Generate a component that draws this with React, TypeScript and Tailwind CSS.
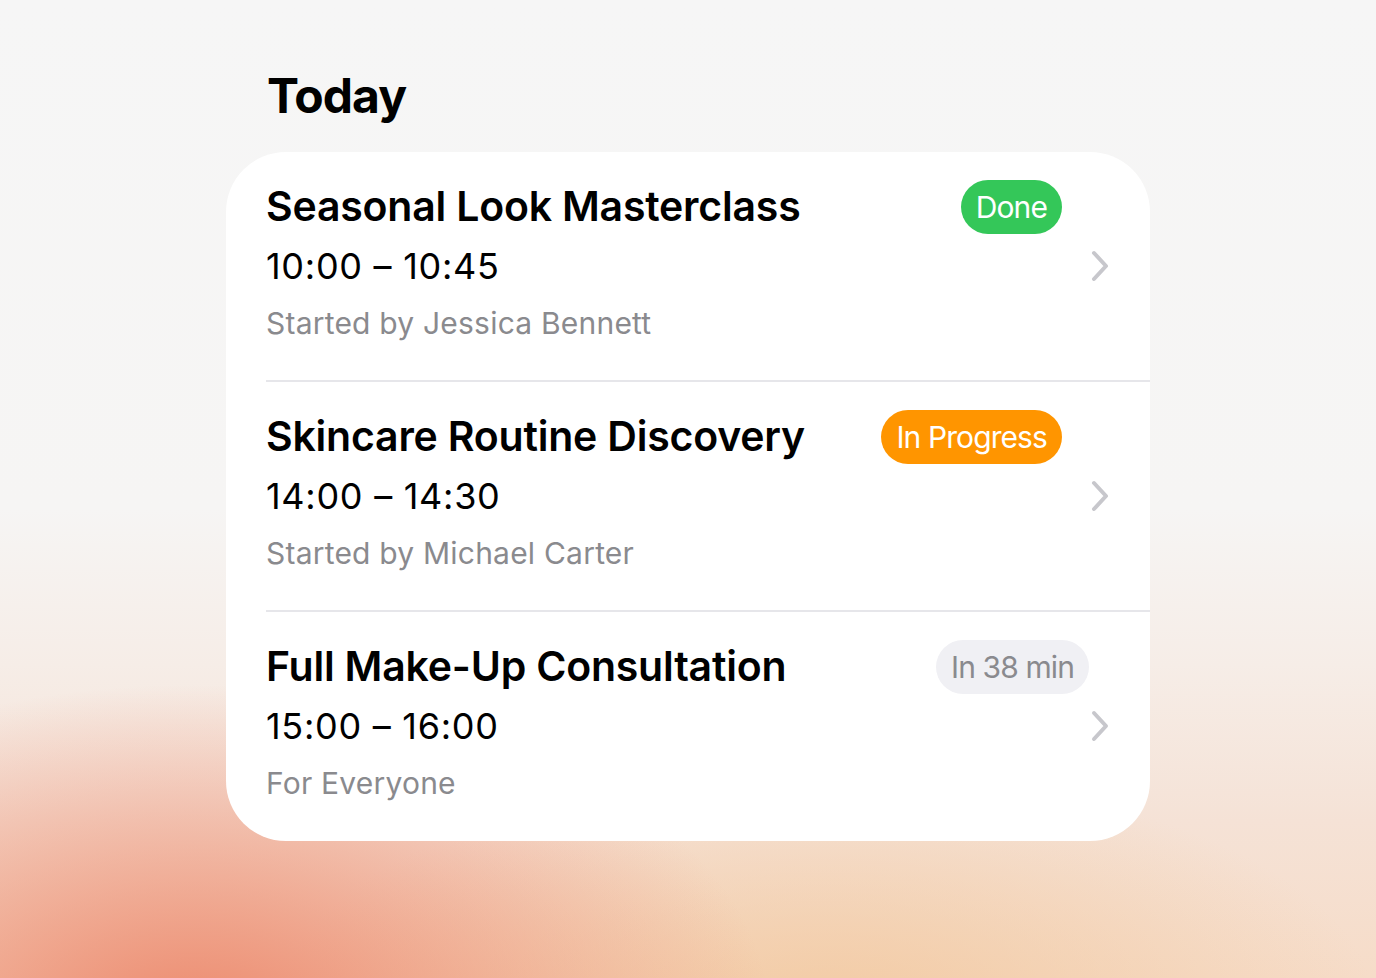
const sessions = [
  {
    title: "Seasonal Look Masterclass",
    time: "10:00 – 10:45",
    note: "Started by Jessica Bennett",
    badge: "Done",
    badgeClass: "bg-[#34c759] text-white mr-[48px]",
  },
  {
    title: "Skincare Routine Discovery",
    time: "14:00 – 14:30",
    note: "Started by Michael Carter",
    badge: "In Progress",
    badgeClass: "bg-[#ff9500] text-white mr-[48px]",
  },
  {
    title: "Full Make-Up Consultation",
    time: "15:00 – 16:00",
    note: "For Everyone",
    badge: "In 38 min",
    badgeClass: "bg-[#f0f0f4] text-[#8a8a8e] mr-[21px]",
  },
];

const Chevron = () => (
  <svg width="20" height="32" viewBox="0 0 20 32" fill="none">
    <path
      d="M4 3 L16 16 L4 29"
      stroke="#c7c7cc"
      strokeWidth="4"
      strokeLinecap="round"
      strokeLinejoin="round"
    />
  </svg>
);

export default function App() {
  return (
    <div className="min-h-screen w-full bg-[#f6f6f6] bg-[radial-gradient(ellipse_42%_34%_at_14%_104%,rgba(236,134,106,0.95),rgba(236,134,106,0)),radial-gradient(ellipse_40%_24%_at_60%_103%,rgba(242,200,158,0.85),rgba(242,200,158,0)),linear-gradient(to_bottom,#f6f6f6_0%,#f6f5f4_52%,#f6ede7_68%,#f5e2d6_84%,#f6dcc8_100%)] font-['Inter','Noto_Sans',sans-serif]">
      <div className="mx-auto w-[924px] pt-[66px]">
        <h1 className="pl-[41px] text-[48px] leading-[60px] font-bold tracking-[-0.02em] text-black">
          Today
        </h1>

        <div className="mt-[26px] rounded-[60px] bg-white">
          {sessions.map((s, i) => {
            const last = i === sessions.length - 1;
            return (
              <div key={s.title} className="pl-[40px]">
                <div
                  className={`pt-[28px] pr-[40px] ${
                    last ? "pb-[33px]" : "pb-[32px] border-b-2 border-[#e6e6ea]"
                  }`}
                >
                  <div className="flex h-[54px] items-center justify-between">
                    <span className="text-[41px] font-semibold tracking-[-0.005em] text-black">
                      {s.title}
                    </span>
                    <span
                      className={`flex h-[54px] items-center rounded-full px-[15px] text-[30px] tracking-[-0.03em] ${s.badgeClass}`}
                    >
                      {s.badge}
                    </span>
                  </div>
                  <div className="flex h-[64px] items-center justify-between">
                    <span className="text-[36px] tracking-[0.02em] text-black">
                      {s.time}
                    </span>
                    <Chevron />
                  </div>
                  <div className="flex h-[50px] items-center">
                    <span className="text-[30px] tracking-[0.007em] text-[#8a8a8e]">
                      {s.note}
                    </span>
                  </div>
                </div>
              </div>
            );
          })}
        </div>
      </div>
    </div>
  );
}
